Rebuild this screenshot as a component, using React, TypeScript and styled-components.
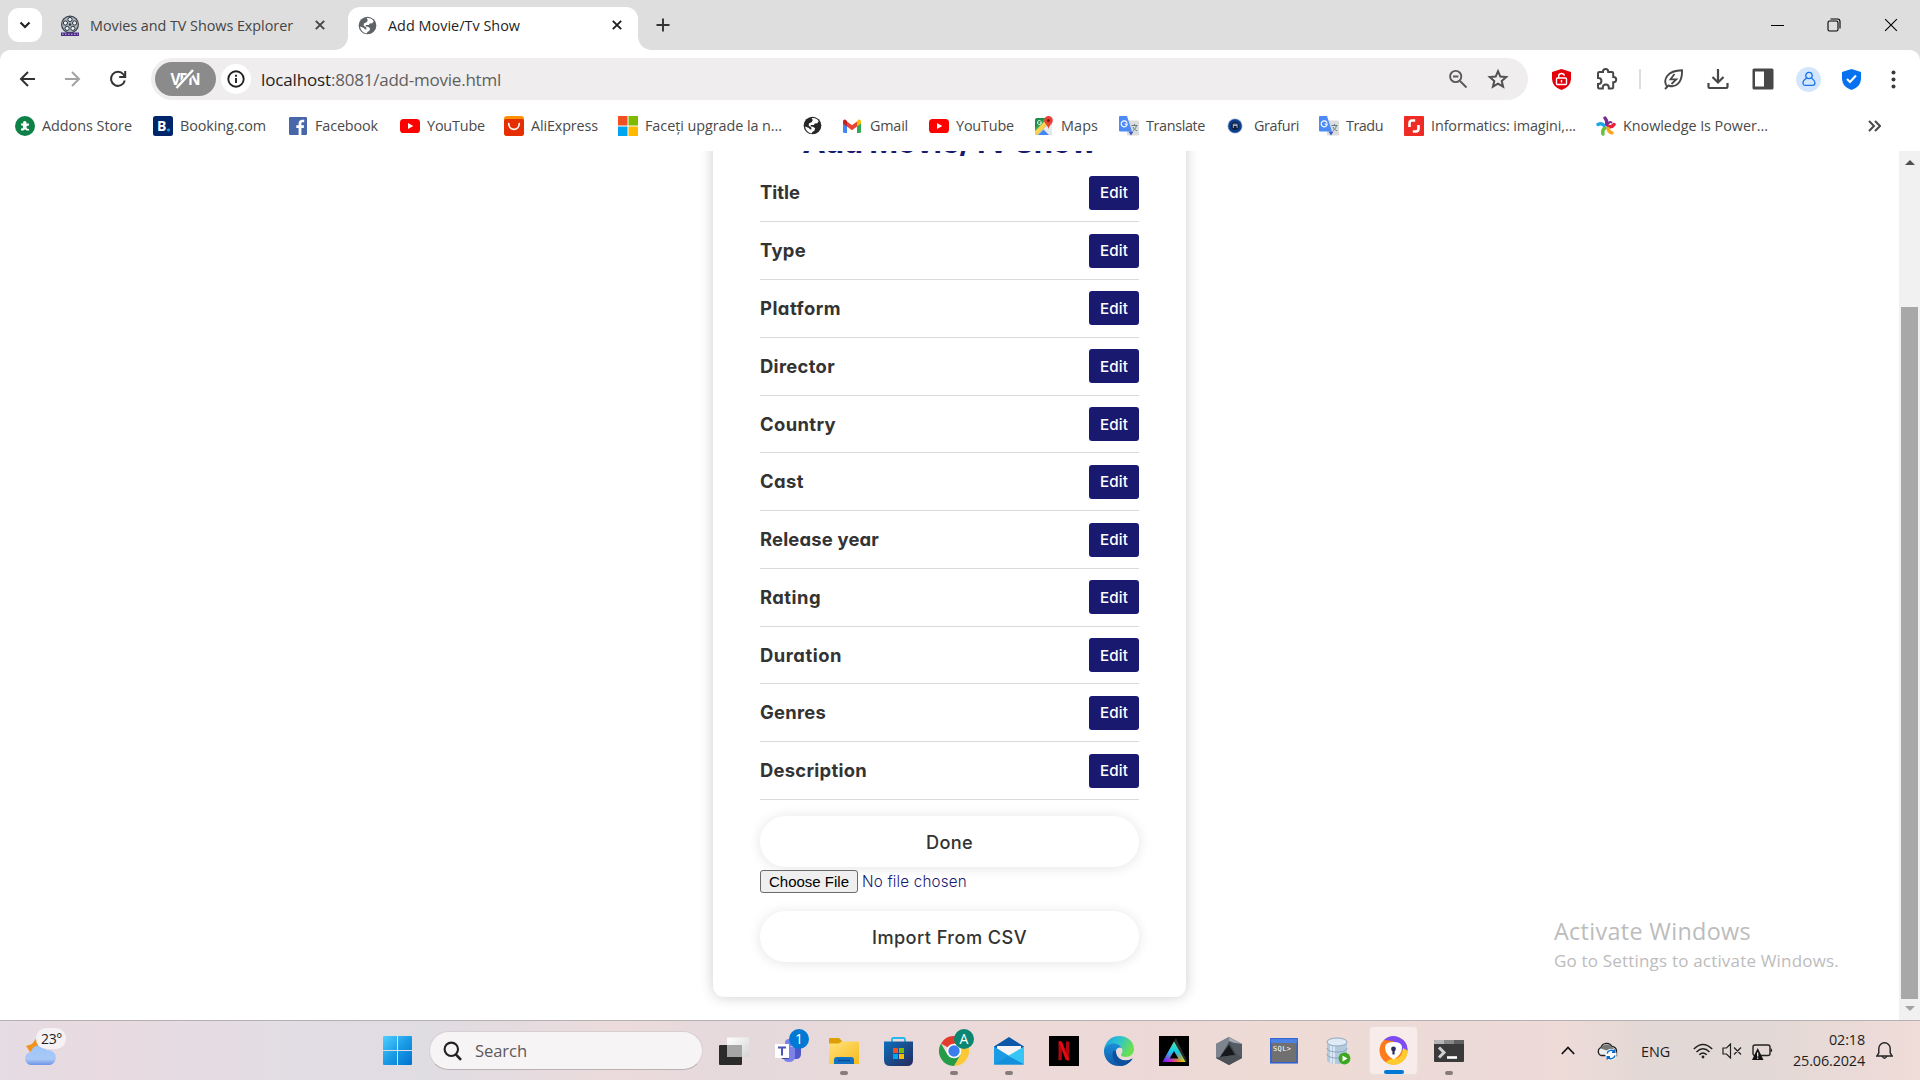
import React, { useLayoutEffect, useRef, useState } from "react";
import styled, { createGlobalStyle, css } from "styled-components";

const ui = `"Open Sans", "Noto Sans", sans-serif`;
const geo = `Inter, "Open Sans", sans-serif`;
const navy = "#191970";

const Global = createGlobalStyle`
  *, *::before, *::after { box-sizing: border-box; }
  html, body { margin: 0; padding: 0; background: #fff; overflow: hidden; }
  svg { display: block; flex: none; }
`;

const Window = styled.div`
  width: 1920px;
  height: 1080px;
  display: flex;
  flex-direction: column;
  overflow: hidden;
  font-family: ${ui};
  color: #1f1f1f;
`;

/* ---------- text that is tracked to fill a given width ---------- */

const Span = styled.span<{ $size: number; $weight?: number; $color?: string; $geo?: boolean }>`
  display: inline-block;
  white-space: pre;
  font-family: ${(p) => (p.$geo ? geo : ui)};
  font-size: ${(p) => p.$size}px;
  font-weight: ${(p) => p.$weight ?? 400};
  color: ${(p) => p.$color ?? "inherit"};
  ${(p) => p.$geo && css`font-feature-settings: "cv11";`}
`;

const LabelBox = styled.span<{ $w: number }>`
  width: ${(p) => p.$w}px;
  flex: none;
  display: block;
  white-space: nowrap;
`;

type LabelProps = {
  w: number;
  size: number;
  weight?: number;
  color?: string;
  geometric?: boolean;
  children: React.ReactNode;
};

function Label({ w, size, weight, color, geometric, children }: LabelProps) {
  const ref = useRef<HTMLSpanElement>(null);
  const [track, setTrack] = useState(0);
  useLayoutEffect(() => {
    const fit = () => {
      const el = ref.current;
      if (!el) return;
      const prev = el.style.letterSpacing;
      el.style.letterSpacing = "0px";
      const natural = el.getBoundingClientRect().width;
      el.style.letterSpacing = prev;
      setTrack((w - natural) / (el.textContent || " ").length);
    };
    fit();
    document.fonts.ready.then(fit);
  }, [w]);
  return (
    <LabelBox $w={w}>
      <Span ref={ref} $size={size} $weight={weight} $color={color} $geo={geometric} style={{ letterSpacing: track }}>
        {children}
      </Span>
    </LabelBox>
  );
}

/* ---------- tab strip ---------- */

const TabStrip = styled.div`
  height: 50px;
  flex: none;
  background: #dedede;
  display: flex;
  align-items: center;
`;

const TabSearch = styled.div`
  width: 34px;
  height: 34px;
  margin: 0 18px 0 8px;
  border-radius: 11px;
  background: #fff;
  display: flex;
  align-items: center;
  justify-content: center;
`;

const Tab = styled.div<{ $active?: boolean; $w: number }>`
  width: ${(p) => p.$w}px;
  height: 43px;
  align-self: flex-end;
  display: flex;
  align-items: center;
  padding: 0 0 7px;
  position: relative;
  ${(p) =>
    p.$active &&
    css`
      background: #fff;
      border-radius: 12px 12px 0 0;
      &::before,
      &::after {
        content: "";
        position: absolute;
        bottom: 0;
        width: 13px;
        height: 13px;
      }
      &::before {
        left: -13px;
        background: radial-gradient(circle at 0 0, transparent 12.5px, #fff 13px);
      }
      &::after {
        right: -13px;
        background: radial-gradient(circle at 100% 0, transparent 12.5px, #fff 13px);
      }
    `}
`;

const Item = styled.div<{ $ml?: number; $w?: number }>`
  margin-left: ${(p) => p.$ml ?? 0}px;
  width: ${(p) => (p.$w ? p.$w + "px" : "auto")};
  flex: none;
  display: flex;
  align-items: center;
  justify-content: center;
`;

const Spacer = styled.div`
  flex: 1;
`;

/* ---------- toolbar ---------- */

const ToolbarWrap = styled.div`
  background: #dedede;
  flex: none;
`;

const Toolbar = styled.div`
  height: 58px;
  background: #fff;
  border-radius: 10px 10px 0 0;
  display: flex;
  align-items: center;
  padding-left: 19px;
`;

const Omnibox = styled.div`
  width: 1377px;
  height: 42px;
  margin-left: 24px;
  border-radius: 21px;
  background: #efedee;
  display: flex;
  align-items: center;
  padding-left: 4px;
`;

const VpnPill = styled.div`
  width: 61px;
  height: 34px;
  border-radius: 17px;
  background: #8b8b8b;
  display: flex;
  align-items: center;
  justify-content: center;
  color: #fff;
`;

const InfoDot = styled.div`
  width: 30px;
  height: 30px;
  margin: 0 10px 0 5px;
  border-radius: 50%;
  background: #fff;
  display: flex;
  align-items: center;
  justify-content: center;
`;

const Url = styled.div`
  display: flex;
  line-height: 24px;
  padding-top: 1px;
`;

const Divider = styled.div`
  width: 2px;
  height: 20px;
  margin-left: 21px;
  background: #dedede;
`;

const Avatar = styled.div`
  width: 25px;
  height: 25px;
  border-radius: 50%;
  background: #d3e6fd;
  margin-left: 22px;
  display: flex;
  align-items: center;
  justify-content: center;
`;

/* ---------- bookmarks ---------- */

const Bookmarks = styled.div`
  height: 43px;
  flex: none;
  background: #fff;
  display: flex;
  align-items: center;
  padding: 0 39px 7px 15px;
  color: #4a4a4a;
`;

const Bookmark = styled.div<{ $w: number }>`
  width: ${(p) => p.$w}px;
  flex: none;
  display: flex;
  align-items: center;
`;

const BookmarkIcon = styled.div`
  width: 20px;
  height: 20px;
  margin-right: 7px;
  flex: none;
`;

const BookmarkText = styled.div`
  padding-bottom: 2px;
`;

/* ---------- page ---------- */

const Viewport = styled.div`
  height: 869px;
  flex: none;
  display: flex;
  background: #fff;
`;

const Page = styled.main`
  flex: 1;
  height: 869px;
  overflow: hidden;
  display: flex;
  justify-content: center;
  align-items: flex-end;
  padding-bottom: 23px;
  position: relative;
`;

const Card = styled.section`
  width: 473px;
  height: 1000px;
  flex: none;
  display: flex;
  flex-direction: column;
  justify-content: flex-end;
  padding: 0 47px 35px;
  border-radius: 11px;
  background: #fff;
  box-shadow: 0 0 14px rgba(0, 0, 0, 0.2);
`;

const Heading = styled.h1`
  margin: 0 0 1px;
  height: 46px;
  line-height: 46px;
  display: flex;
  justify-content: center;
`;

const Row = styled.div`
  height: 57.77px;
  flex: none;
  display: flex;
  justify-content: space-between;
  align-items: center;
  border-bottom: 1px solid #dadada;
`;

const EditButton = styled.button`
  width: 50px;
  height: 34px;
  padding: 0 0 0 11px;
  border: 0;
  border-radius: 3px;
  background: ${navy};
  text-align: left;
`;

const PillButton = styled.button<{ $mt: number }>`
  width: 100%;
  height: 51px;
  flex: none;
  margin: ${(p) => p.$mt}px 0 0;
  padding: 0;
  border: 0;
  border-radius: 26px;
  background: #fff;
  display: flex;
  align-items: center;
  justify-content: center;
  box-shadow: 0 1px 13px rgba(0, 0, 0, 0.11);
`;

const FileRow = styled.div`
  height: 23px;
  margin-top: 3px;
  flex: none;
  display: flex;
  align-items: center;
`;

const FileButton = styled.button`
  width: 98px;
  height: 23px;
  margin-right: 4px;
  padding: 0;
  border: 1px solid #6b6b6b;
  border-radius: 3px;
  background: #efefef;
  color: #000;
  font: 15px/20px "Liberation Sans", Arial, sans-serif;
`;

const FileName = styled.div`
  padding-bottom: 2px;
`;

const Watermark = styled.div`
  position: absolute;
  left: 1554px;
  top: 765px;
  color: #bcbcbc;
  line-height: 30px;
  display: flex;
  flex-direction: column;
`;

const WatermarkNote = styled.div`
  line-height: 24px;
`;

const Scrollbar = styled.div`
  width: 21px;
  background: #f1f1f1;
  display: flex;
  flex-direction: column;
  align-items: center;
  padding: 9px 0 9px;
`;

const Thumb = styled.div`
  width: 17px;
  height: 692px;
  margin-top: 141px;
  background: #a8a8a8;
`;

const Arrow = styled.div<{ $down?: boolean }>`
  width: 0;
  height: 0;
  border: 5px solid transparent;
  ${(p) =>
    p.$down
      ? css`border-top: 5px solid #a3a3a3; border-bottom: 0; margin-top: 7px;`
      : css`border-bottom: 5px solid #505050; border-top: 0; margin-bottom: 1px;`}
`;

/* ---------- taskbar ---------- */

const Taskbar = styled.footer`
  height: 60px;
  flex: none;
  border-top: 1px solid #b8b1b3;
  display: flex;
  align-items: center;
  position: relative;
  background: linear-gradient(
    90deg,
    #e6dce3 0, #e8dae0 110px, #e3dde4 270px, #dfdce2 430px, #ecdbdc 620px, #e5d9dc 730px,
    #ecdad9 1000px, #ecd9d7 1150px, #eedbd5 1290px, #ecdad8 1470px, #eedbd8 1560px,
    #e2d8d5 1650px, #e2d8d5 1760px, #f0dcd9 1920px
  );
`;

const Weather = styled.div`
  width: 60px;
  height: 46px;
  margin-left: 22px;
  position: relative;
  flex: none;
`;

const TempBadge = styled.div`
  position: absolute;
  left: 14px;
  top: 0;
  width: 30px;
  height: 21px;
  border-radius: 10px;
  background: #f6f1f3;
  padding-left: 5px;
  line-height: 20px;
`;

const SearchBox = styled.div`
  width: 274px;
  height: 39px;
  margin: 0 3px 0 17px;
  border-radius: 20px;
  background: #f7f4f6;
  border: 1px solid #d8cfd3;
  border-bottom-color: #b9b1b4;
  display: flex;
  align-items: center;
  padding-left: 13px;
  gap: 13px;
  flex: none;
`;

const AppSlot = styled.div<{ $active?: boolean; $mark?: "dot" | "bar" }>`
  width: 49px;
  height: 49px;
  margin: 0 3px;
  flex: none;
  border-radius: 5px;
  position: relative;
  display: flex;
  align-items: center;
  justify-content: center;
  ${(p) => p.$active && css`background: #f7ecea; box-shadow: 0 0 0 1px #eadfdc inset;`}
  ${(p) =>
    p.$mark &&
    css`
      &::after {
        content: "";
        position: absolute;
        bottom: ${p.$mark === "bar" ? 1 : 0}px;
        left: 50%;
        width: ${p.$mark === "bar" ? 20 : 8}px;
        height: 4px;
        border-radius: 2px;
        transform: translateX(-50%);
        background: ${p.$mark === "bar" ? "#0078d4" : "#857c7b"};
      }
    `}
`;

const CountBadge = styled.div<{ $bg: string; $x: number; $y: number }>`
  position: absolute;
  left: ${(p) => p.$x}px;
  top: ${(p) => p.$y}px;
  width: 20px;
  height: 20px;
  border-radius: 50%;
  background: ${(p) => p.$bg};
  color: #fff;
  font-size: 14px;
  line-height: 19px;
  text-align: center;
`;

const Clock = styled.div`
  width: 74px;
  margin-left: 18px;
  margin-bottom: 2px;
  display: flex;
  flex-direction: column;
  align-items: flex-end;
  line-height: 20px;
  flex: none;
`;

/* ---------- drawings ---------- */

const Cross = ({ c = "#303030", s = 10, w = 1.9 }) => (
  <svg width={s} height={s} viewBox="0 0 10 10" stroke={c} strokeWidth={w} fill="none">
    <path d="M.8.8l8.4 8.4M9.2.8L.8 9.2" />
  </svg>
);

const Globe = ({ c }: { c: string }) => (
  <svg width="19" height="19" viewBox="0 0 20 20">
    <circle cx="10" cy="10" r="9.3" fill={c} />
    <path d="M9 2.2c3.2-.5 6 .8 7.5 3.3l-1.5 2.1-2.6.2-1 1.6-3 .1-.6 1.2 3.2.8 1.8 1.6-.8 2.3-2.2 1.4-.4 1.4C5.600 18.100 2.600 14.600 2.200 11l4.100 1.500.9 1.500 1.800.2-.3-2.100-2.700-1.900.2-2.300 3.100-1.500 1-2.300z" fill="#fff" />
  </svg>
);

const FilmReel = () => (
  <svg width="20" height="21" viewBox="0 0 20 21">
    <circle cx="10" cy="9.500" r="9" fill="#38404a" />
    <circle cx="10" cy="9.500" r="7.800" fill="#a9b4bd" />
    {[[10, 4.5], [14.6, 8], [12.900, 13.400], [7.100, 13.400], [5.400, 8]].map(([x, y]) => (
      <circle key={x} cx={x} cy={y} r="2.100" fill="#e8eef1" stroke="#30363d" strokeWidth="1" />
    ))}
    <circle cx="10" cy="9.500" r="1.300" fill="#30363d" />
    <path d="M1 17.500h18V21H1z" fill="#4b2a86" />
    <path d="M2 19.200h16" stroke="#d9c9f0" strokeWidth="1" strokeDasharray="1.500 1.500" />
  </svg>
);

const YouTube = () => (
  <svg width="20" height="20" viewBox="0 0 20 20">
    <rect x="0" y="3" width="20" height="14" rx="3.600" fill="#f00" />
    <path d="M8 7l5.300 3L8 13z" fill="#fff" />
  </svg>
);

const Translate = () => (
  <svg width="20" height="20" viewBox="0 0 20 20">
    <rect x="8" y="4.500" width="12" height="15" rx="1" fill="#dcdcdc" />
    <path d="M9.500 15.500h5l-2.500 4z" fill="#3757c4" />
    <path d="M1 0h7l5 15.500H1a1 1 0 0 1-1-1V1a1 1 0 0 1 1-1z" fill="#4c8bf5" />
    <path d="M8 6.700A3 3 0 1 0 8.200 8.200H5.800" stroke="#fff" strokeWidth="1.200" fill="none" />
    <path d="M12.500 9.500h6M15.500 8v1.500M17.500 9.500c-.4 2.500-2 4-3.500 5M14 11c.8 1.800 2 3 4 3.800" stroke="#607d8b" strokeWidth="1" fill="none" />
  </svg>
);

const bookmarkIcons: Record<string, React.ReactNode> = {
  addons: (
    <svg width="20" height="20" viewBox="0 0 20 20">
      <circle cx="10" cy="10" r="10" fill="#0d8148" />
      <path d="M6 7.500h2.300a1.700 1.700 0 1 1 3 0H14v2.300a1.700 1.700 0 1 0 0 3V14.500h-2.500a1.600 1.600 0 0 0-3 0H6v-2.200a1.500 1.500 0 1 0 0-2.800z" fill="#fff" />
    </svg>
  ),
  booking: (
    <svg width="20" height="20" viewBox="0 0 20 20">
      <rect width="20" height="20" rx="2.500" fill="#00256a" />
      <text x="4" y="15" fontSize="14" fontWeight="700" fill="#fff" fontFamily="Open Sans">B</text>
      <circle cx="15.500" cy="14" r="1.600" fill="#09a3e8" />
    </svg>
  ),
  facebook: (
    <svg width="20" height="20" viewBox="0 0 20 20">
      <rect x="1" y="1" width="18" height="18" rx="1" fill="#4867aa" />
      <path d="M13.400 19v-7h2.300l.4-2.800h-2.700V7.600c0-.9.300-1.400 1.400-1.400h1.400V3.800c-3.500-.5-5.600.6-5.600 3.500v1.900H8.300V12h2.300v7z" fill="#fff" />
    </svg>
  ),
  youtube: <YouTube />,
  ali: (
    <svg width="20" height="20" viewBox="0 0 20 20">
      <rect width="20" height="20" rx="3" fill="#ff9000" />
      <path d="M0 5q0-2 2-2h16q2 0 2 2v12a3 3 0 0 1-3 3H3a3 3 0 0 1-3-3z" fill="#e62e04" />
      <path d="M4.700 7.500c.4 7.800 10.200 7.800 10.600 0" stroke="#fff" strokeWidth="1.700" fill="none" strokeLinecap="round" />
    </svg>
  ),
  ms: (
    <svg width="20" height="20" viewBox="0 0 20 20">
      <path d="M0 0h9.500v9.500H0z" fill="#f25022" />
      <path d="M10.500 0H20v9.500h-9.500z" fill="#7fba00" />
      <path d="M0 10.500h9.500V20H0z" fill="#00a4ef" />
      <path d="M10.500 10.500H20V20h-9.500z" fill="#ffb900" />
    </svg>
  ),
  globe: <Globe c="#262626" />,
  gmail: (
    <svg width="20" height="20" viewBox="0 0 20 20">
      <path d="M0 5.500v10.300c0 .7.500 1.200 1.200 1.200H4V9z" fill="#4285f4" />
      <path d="M14 9v8h2.800c.7 0 1.200-.5 1.200-1.200V5.500z" fill="#34a853" />
      <path d="M4 5.500v5l5 3.700 5-3.700v-5L9 9.200z" fill="#ea4335" />
      <path d="M0 5.500v2L4 10.500V5L2.800 4C1.500 3 0 4 0 5.500z" fill="#c5221f" />
      <path d="M18 5.500v2l-4 3V5l1.200-1C16.500 3 18 4 18 5.500z" fill="#fbbc04" />
    </svg>
  ),
  maps: (
    <svg width="20" height="20" viewBox="0 0 20 20">
      <rect x="1" y="2" width="17" height="17" rx="2.500" fill="#34a853" />
      <path d="M3 19L16 6l2 2v9a2 2 0 0 1-2 2z" fill="#e8eaed" />
      <path d="M4 19l5.500-5.500L15 19z" fill="#4285f4" />
      <path d="M1 15L14 2l3 3L3 19q-2-.500-2-2z" fill="#ffd04b" />
      <path d="M1 12L11 2H3.500Q1 2 1 4.500z" fill="#1e8e4a" />
      <path d="M14.500 0a4.300 4.300 0 0 0-4.300 4.400c0 3 3.300 4.200 4.300 8.600 1-4.400 4.300-5.600 4.300-8.600A4.300 4.300 0 0 0 14.500 0z" fill="#ea4335" />
      <circle cx="14.500" cy="4.400" r="1.500" fill="#811411" />
      <path d="M7.200 5.500a2 2 0 1 0 .3 1.300H5.800" stroke="#fff" strokeWidth="1" fill="none" />
    </svg>
  ),
  translate: <Translate />,
  grafuri: (
    <svg width="16" height="20" viewBox="0 0 16 20">
      <circle cx="8" cy="10" r="7.500" fill="#8ea9cf" />
      <circle cx="8" cy="10" r="6.700" fill="#0c3d8c" />
      <circle cx="8" cy="10" r="4" fill="#111f3c" />
      <path d="M6.300 12V8.200h3.800V12M6.300 9.500h3.800" stroke="#a9c2e6" strokeWidth=".9" fill="none" />
    </svg>
  ),
  informatics: (
    <svg width="20" height="20" viewBox="0 0 20 20">
      <rect width="20" height="20" rx="1" fill="#ee2b24" />
      <path d="M5.500 11V7.200q0-2.700 2.700-2.700h3M14.500 9v3.800q0 2.700-2.700 2.700h-3" stroke="#fff" strokeWidth="2.600" fill="none" />
    </svg>
  ),
  knowledge: (
    <svg width="20" height="20" viewBox="0 0 20 20" fill="none" strokeWidth="3.400" strokeLinecap="round">
      <path d="M10.500 8.500Q11.500 5 9 2" stroke="#7b2a90" />
      <path d="M11.500 8.500Q13.500 5 15.500 6.500" stroke="#7b2a90" strokeWidth="2" />
      <path d="M12.500 10.500q3.500 1 5.500-2" stroke="#e8203a" />
      <path d="M12 12.500q.5 3.500 4 4.300" stroke="#f9a51a" />
      <path d="M9 12q-3 2-2 6" stroke="#6cbf3a" />
      <path d="M8 9.500Q5.500 6.500 2 8.500" stroke="#1da7e0" />
    </svg>
  ),
};

type BM = { icon: string; label: string; w: number; total: number };
const bookmarks: BM[] = [
  { icon: "addons", label: "Addons Store", w: 90, total: 138 },
  { icon: "booking", label: "Booking.com", w: 86, total: 135 },
  { icon: "facebook", label: "Facebook", w: 63, total: 112 },
  { icon: "youtube", label: "YouTube", w: 58, total: 104 },
  { icon: "ali", label: "AliExpress", w: 67, total: 114 },
  { icon: "ms", label: "Faceți upgrade la n...", w: 137, total: 185 },
  { icon: "globe", label: "", w: 0, total: 40 },
  { icon: "gmail", label: "Gmail", w: 38, total: 86 },
  { icon: "youtube", label: "YouTube", w: 58, total: 105 },
  { icon: "maps", label: "Maps", w: 37, total: 85 },
  { icon: "translate", label: "Translate", w: 59, total: 108 },
  { icon: "grafuri", label: "Grafuri", w: 45, total: 92 },
  { icon: "translate", label: "Tradu", w: 37, total: 85 },
  { icon: "informatics", label: "Informatics: imagini,...", w: 145, total: 192 },
  { icon: "knowledge", label: "Knowledge Is Power...", w: 145, total: 190 },
];

const fields: [string, number][] = [
  ["Title", 40],
  ["Type", 46],
  ["Platform", 81],
  ["Director", 75],
  ["Country", 76],
  ["Cast", 44],
  ["Release year", 119],
  ["Rating", 61],
  ["Duration", 82],
  ["Genres", 66],
  ["Description", 107],
];

const WinLogo = () => (
  <svg width="29" height="29" viewBox="0 0 29 29">
    <defs>
      <linearGradient id="wl" x1="0" y1="0" x2="1" y2="1">
        <stop offset="0" stopColor="#4fd0ff" />
        <stop offset=".5" stopColor="#1a9be6" />
        <stop offset="1" stopColor="#0072cf" />
      </linearGradient>
    </defs>
    <path d="M1 0h13v14H0V1q0-1 1-1zM15 0h13q1 0 1 1v13H15zM0 15h14v14H1q-1 0-1-1zM15 15h14v13q0 1-1 1H15z" fill="url(#wl)" />
  </svg>
);

const TaskView = () => (
  <svg width="30" height="30" viewBox="0 0 30 30">
    <defs>
      <linearGradient id="tv" x1="0" y1="0" x2="1" y2="1">
        <stop offset="0" stopColor="#fff" />
        <stop offset="1" stopColor="#d5d5d5" />
      </linearGradient>
    </defs>
    <rect x="0" y="9" width="23" height="20" rx="1" fill="#2b2b2b" />
    <rect x="8" y="1.500" width="22" height="19.500" rx="1" fill="url(#tv)" />
    <path d="M8 9h15v12H9q-1 0-1-1z" fill="#a6a6a6" />
  </svg>
);

const Teams = () => (
  <svg width="30" height="30" viewBox="0 0 30 30">
    <circle cx="15" cy="7" r="4" fill="#7b83eb" />
    <path d="M18 11h9v7q0 5-5 5h-4z" fill="#5059c9" />
    <path d="M9 11h12v9q0 6-6 6t-6-6z" fill="#7b83eb" />
    <path d="M4 11h11v12H8z" fill="#3e4498" />
    <rect x="1" y="8" width="14" height="14" fill="#fff" />
    <path d="M4 11.500h8M8 11.500v8" stroke="#4b53bc" strokeWidth="2" />
  </svg>
);

const Folder = () => (
  <svg width="30" height="30" viewBox="0 0 30 30">
    <defs>
      <linearGradient id="fo" x1="0" y1="0" x2="1" y2="1">
        <stop offset="0" stopColor="#ffe27a" />
        <stop offset="1" stopColor="#f7bb1d" />
      </linearGradient>
    </defs>
    <path d="M0 3q0-1 1-1h9l3 3v6H0z" fill="#dd9f05" />
    <path d="M0 7.500h9.500L13 5.500h16q1 0 1 1V28H0z" fill="url(#fo)" />
    <path d="M5 28v-4q0-3 3-3h14q3 0 3 3v4z" fill="#1172c4" />
    <path d="M9 24.500h12" stroke="#0a4f94" strokeWidth="1.500" />
  </svg>
);

const Store = () => (
  <svg width="29" height="30" viewBox="0 0 29 30">
    <defs>
      <linearGradient id="st" x1="0" y1="0" x2="1" y2="1">
        <stop offset="0" stopColor="#0b6fbd" />
        <stop offset="1" stopColor="#28295a" />
      </linearGradient>
    </defs>
    <path d="M8 8V3.500Q8 2 9.500 2h10Q21 2 21 3.500V8" stroke="#24b7f0" strokeWidth="1.900" fill="none" />
    <path d="M0 5.500h29V24q0 6-6 6H6q-6 0-6-6z" fill="url(#st)" />
    <path d="M9 12h5v5H9z" fill="#f25022" />
    <path d="M15 12h5v5h-5z" fill="#7fba00" />
    <path d="M9 18h5v5H9z" fill="#00a4ef" />
    <path d="M15 18h5v5h-5z" fill="#ffb900" />
  </svg>
);

const Chrome = () => (
  <svg width="30" height="30" viewBox="0 0 30 30">
    <path d="M15 15L2 7.500A15 15 0 0 1 28 7.500z" fill="#e33b2e" />
    <path d="M15 7.500h13A15 15 0 0 1 15 30l6.500-11.300z" fill="#fcc934" />
    <path d="M8.500 18.700L2 7.500A15 15 0 0 0 15 30l6.500-11.300z" fill="#259b48" />
    <circle cx="15" cy="15" r="7.300" fill="#fff" />
    <circle cx="15" cy="15" r="5.700" fill="#3b7ded" />
  </svg>
);

const Mail = () => (
  <svg width="30" height="30" viewBox="0 0 30 30">
    <path d="M0 10.500L15 1l15 9.500V28H0z" fill="#0a5aa9" />
    <path d="M3 10h24v10H3z" fill="#f4f4f4" />
    <path d="M0 10.500L17 21 30 28.500H0z" fill="#1a9be3" />
    <path d="M30 10.500L14 20l16 8.500z" fill="#36c5f7" />
    <path d="M0 28.500L14 20l3 1.500 13 7z" fill="#148fdb" />
  </svg>
);

const Netflix = () => (
  <svg width="30" height="30" viewBox="0 0 30 30">
    <path d="M0 0h30v30H0z" fill="#000" />
    <path d="M9.500 5.500h3.300V24l-3.300.6zM17 5.500h3.300v19.100L17 24z" fill="#b0060f" />
    <path d="M9.500 5.500h3.400l7.400 19.100-3.500-.6z" fill="#e50914" />
  </svg>
);

const Edge = () => (
  <svg width="30" height="30" viewBox="0 0 30 30">
    <defs>
      <linearGradient id="e1" x1="0" y1="0" x2="1" y2=".4">
        <stop offset="0" stopColor="#1f9be0" />
        <stop offset=".5" stopColor="#2bc3d2" />
        <stop offset="1" stopColor="#6be04f" />
      </linearGradient>
      <linearGradient id="e2" x1="0" y1="0" x2="0" y2="1">
        <stop offset="0" stopColor="#1b8fd8" />
        <stop offset="1" stopColor="#0e56a8" />
      </linearGradient>
    </defs>
    <path d="M0 14C1 6 7 0 15 0c9 0 15 6 15 13 0 5-4 8-8 8-3 0-5-1-5-2s1.500-1.500 1.500-4c0-4-4-7-8.500-7C5 8 1 11 0 14z" fill="url(#e1)" />
    <path d="M0 14c1-4 5-6.500 9.500-6.500 4 0 7 2 8.300 4.500-1-.7-5.300-1-5.800 3-.5 5 4 10 10 9.500 2.500 0 4.500-1 6.500-2C26 27 21 30 15 30 6 30-.5 23 0 14z" fill="url(#e2)" />
    <path d="M9.500 14.500C7 19 9 27 17 29.900 22 29.500 26.500 26.500 28.600 22.500 20 27 12 23 12 15.500z" fill="#0c4f9e" />
  </svg>
);

const Prism = () => (
  <svg width="30" height="30" viewBox="0 0 30 30">
    <defs>
      <linearGradient id="pr" x1="0" y1="0" x2="1" y2="0">
        <stop offset="0" stopColor="#5b10ff" />
        <stop offset=".35" stopColor="#e010c8" />
        <stop offset=".65" stopColor="#ff6a10" />
        <stop offset="1" stopColor="#d6f010" />
      </linearGradient>
      <linearGradient id="pr2" x1="0" y1="0" x2="0" y2="1">
        <stop offset="0" stopColor="#3df0a0" />
        <stop offset=".5" stopColor="#15c8ee" />
        <stop offset="1" stopColor="#15c8ee" stopOpacity="0" />
      </linearGradient>
    </defs>
    <path d="M0 0h30v30H0z" fill="#000" />
    <path d="M17 2l11 23-2 1L15 5z" fill="#2a2a2a" />
    <path d="M15 5.500L26.500 26H3.500z" fill="url(#pr)" />
    <path d="M15 5.500L26.500 26H3.500z" fill="url(#pr2)" />
    <path d="M15 15l4.300 7.500h-8.600z" fill="#000" />
  </svg>
);

const Hex = () => (
  <svg width="28" height="30" viewBox="0 0 28 30">
    <path d="M14 1l13 7v14l-13 7-13-7V8z" fill="#454b54" />
    <path d="M14 1l13 7v3L14 5 4 14 1 20V8z" fill="#a3a9b1" />
    <path d="M14 1v5L5 21l-4 1V8z" fill="#7d848e" />
    <path d="M14 9l6 10-15 2z" fill="#16181c" />
    <path d="M1 22l4-1 15-2 7 3-13 7z" fill="#4d5259" />
    <path d="M14 6l8 13 5 3V8z" fill="#555c66" />
  </svg>
);

const Sql = () => (
  <svg width="28" height="26" viewBox="0 0 28 26">
    <rect x=".8" y=".8" width="26.400" height="24" fill="#707070" stroke="#2c5fd0" strokeWidth="1.500" />
    <path d="M1 1h26v4H1z" fill="#4b82e4" />
    <text x="3" y="12.500" fontSize="7" fill="#fff" fontFamily="DejaVu Sans Mono" textLength="18">SQL&gt;</text>
  </svg>
);

const Database = () => (
  <svg width="26" height="30" viewBox="0 0 26 30">
    <path d="M1 6v18c0 2.500 4.500 4 10 4s10-1.500 10-4V6z" fill="#b4c9dd" />
    <path d="M5 8v19M8 9v19" stroke="#dbe8f3" strokeWidth="2" />
    <path d="M1 12c0 2.500 4.500 4 10 4s10-1.500 10-4M1 18c0 2.500 4.500 4 10 4s10-1.500 10-4" stroke="#8aa5bf" fill="none" />
    <ellipse cx="11" cy="6" rx="10" ry="4" fill="#dfeaf4" stroke="#8fa9c2" />
    <circle cx="18.500" cy="22.500" r="5.900" fill="#3da71f" />
    <path d="M16.500 19.500l5 3-5 3z" fill="#fff" />
  </svg>
);

const SecureBrowser = () => (
  <svg width="29" height="29" viewBox="0 0 29 29">
    <circle cx="14.500" cy="14.500" r="14" fill="#ff7a1a" />
    <path d="M5 4A14 14 0 0 1 28.500 14.500q-3 3-7-2.500L14 5z" fill="#7b4df2" />
    <path d="M28.500 14.500A14 14 0 0 1 7 26.500q2-4 8-3.500 8 0 9-11z" fill="#ffcb2e" />
    <path d="M14.500 6q8 0 8.500 5 0 8-8.500 12.500Q6 19 6 11q.5-5 8.500-5z" fill="#fff" />
    <circle cx="14.500" cy="13" r="2.400" fill="#2b2f5a" />
    <path d="M13.400 13h2.200v5.500h-2.200z" fill="#2b2f5a" />
  </svg>
);

const Terminal = () => (
  <svg width="30" height="24" viewBox="0 0 30 24">
    <rect y="1" width="30" height="22" rx="1" fill="#3a3a3a" />
    <path d="M0 5V2q0-1 1-1h9v4z" fill="#b5b5b5" />
    <path d="M10 1h10v4H10z" fill="#888" />
    <path d="M20 1h9q1 0 1 1v3H20z" fill="#5f5f5f" />
    <path d="M5 8.500l5 5-5 5" stroke="#d0d0d0" strokeWidth="3" fill="none" />
    <path d="M13 18.500h10" stroke="#fff" strokeWidth="2.600" />
  </svg>
);

type App = { el: React.ReactNode; mark?: "dot" | "bar"; active?: boolean; badge?: [string, string, number, number] };
const apps: App[] = [
  { el: <TaskView /> },
  { el: <Teams />, badge: ["1", "#0078d4", 25, 3] },
  { el: <Folder />, mark: "dot" },
  { el: <Store /> },
  { el: <Chrome />, mark: "dot", badge: ["A", "#0b8673", 25, 3] },
  { el: <Mail />, mark: "dot" },
  { el: <Netflix /> },
  { el: <Edge /> },
  { el: <Prism /> },
  { el: <Hex /> },
  { el: <Sql /> },
  { el: <Database /> },
  { el: <SecureBrowser />, mark: "bar", active: true },
  { el: <Terminal />, mark: "dot" },
];

const ink = "#474747";

export default function App() {
  return (
    <Window>
      <Global />
      <TabStrip>
        <TabSearch>
          <svg width="12" height="8" viewBox="0 0 12 8" fill="none" stroke="#222" strokeWidth="2.200">
            <path d="M1.500 1.500L6 6l4.500-4.500" />
          </svg>
        </TabSearch>
        <Tab $w={288}>
          <FilmReel />
          <Item $ml={10}>
            <Label w={203} size={14.4} color="#454545">Movies and TV Shows Explorer</Label>
          </Item>
          <Item $ml={22}><Cross c="#454545" /></Item>
        </Tab>
        <Tab $w={290} $active>
          <Item $ml={10}><Globe c="#5f6368" /></Item>
          <Item $ml={11}>
            <Label w={132} size={14.4}>Add Movie/Tv Show</Label>
          </Item>
          <Item $ml={92}><Cross c="#1f1f1f" /></Item>
        </Tab>
        <Item $ml={18}>
          <svg width="14" height="14" viewBox="0 0 14 14" stroke="#333" strokeWidth="1.900"><path d="M7 .5v13M.5 7h13" /></svg>
        </Item>
        <Spacer />
        <svg width="13" height="13" viewBox="0 0 13 13" stroke="#000"><path d="M0 6.500h13" /></svg>
        <Item $ml={43}>
          <svg width="14" height="14" viewBox="0 0 14 14" stroke="#000" fill="none" strokeWidth="1.100">
            <rect x="1" y="3" width="10" height="10" rx="1.500" />
            <path d="M3.500 1h7q2.500 0 2.500 2.500v7" />
          </svg>
        </Item>
        <Item $ml={43}><Cross c="#000" s={14} w={0.8} /></Item>
        <Item $w={22} />
      </TabStrip>

      <ToolbarWrap>
        <Toolbar>
          <svg width="18" height="18" viewBox="0 0 18 18" stroke="#333" fill="none" strokeWidth="2"><path d="M16 9H2.500M9 2L2 9l7 7" /></svg>
          <Item $ml={26}>
            <svg width="18" height="18" viewBox="0 0 18 18" stroke="#a3a3a3" fill="none" strokeWidth="2"><path d="M2 9h13.500M9 2l7 7-7 7" /></svg>
          </Item>
          <Item $ml={28}>
            <svg width="18" height="18" viewBox="0 0 18 18" stroke="#333" fill="none" strokeWidth="2">
              <path d="M15.800 10.500A7 7 0 1 1 14.500 4.500L16 6.500" /><path d="M16.200 1v6h-6" />
            </svg>
          </Item>
          <Omnibox>
            <VpnPill>
              <svg width="32" height="22" viewBox="0 0 32 22">
                <text x="0.500" y="17" fontSize="15.500" fontWeight="700" fill="#fff" fontFamily="Open Sans" textLength="30">VPN</text>
                <path d="M7 21L24 2" stroke="#8b8b8b" strokeWidth="5" />
                <path d="M6.500 20L23 2" stroke="#fff" strokeWidth="2.500" />
              </svg>
            </VpnPill>
            <InfoDot>
              <svg width="18" height="18" viewBox="0 0 18 18">
                <circle cx="9" cy="9" r="7.700" stroke="#222" strokeWidth="1.900" fill="none" />
                <path d="M9 8v5M9 4.700v2" stroke="#222" strokeWidth="1.900" />
              </svg>
            </InfoDot>
            <Url>
              <Label w={70} size={17} color="#1f1f1f">localhost</Label>
              <Label w={170} size={17} color="#5f5f5f">:8081/add-movie.html</Label>
            </Url>
            <Item $ml={947}>
              <svg width="20" height="20" viewBox="0 0 20 20" stroke="#5a5a5a" fill="none" strokeWidth="1.900">
                <circle cx="7.700" cy="7.500" r="5.600" /><path d="M12 12l6.500 6.500M5 7.500h5.400" />
              </svg>
            </Item>
            <Item $ml={19}>
              <svg width="22" height="22" viewBox="0 0 22 22" stroke="#505050" fill="none" strokeWidth="2" strokeLinejoin="miter">
                <path d="M11 3.200l2.300 5.400 5.900.5-4.500 3.900 1.400 5.700L11 15.600l-5.100 3.100L7.300 13 2.800 9.100l5.900-.5z" />
              </svg>
            </Item>
          </Omnibox>
          <Item $ml={24}>
            <svg width="19" height="21" viewBox="0 0 19 21">
              <path d="M9.500 0L19 3v7q-.5 8-9.500 11Q.5 18 0 10V3z" fill="#e3000b" />
              <rect x="4.500" y="9" width="10" height="6.500" rx="1" fill="none" stroke="#fff" strokeWidth="1.400" />
              <path d="M6.700 9V6.700q.2-2.200 2.800-2.200t2.800 2.200M9.500 11v2.500" stroke="#fff" strokeWidth="1.400" fill="none" />
            </svg>
          </Item>
          <Item $ml={23}>
            <svg width="24" height="24" viewBox="0 0 24 24" fill="none" stroke={ink} strokeWidth="2">
              <path d="M4 6.300Q4 5 5.300 5H9V4.600a2.600 2.600 0 0 1 5.200 0V5h3.700q1.300 0 1.300 1.300V10h.4a2.600 2.600 0 0 1 0 5.200h-.4v5q0 1.300-1.300 1.300H14.800v-.9a3 3 0 0 0-6 0v.9H5.300Q4 21.500 4 20.200V17h.4a3 3 0 0 0 0-6H4z" />
            </svg>
          </Item>
          <Divider />
          <Item $ml={22}>
            <svg width="21" height="22" viewBox="0 0 21 22" fill="none" stroke={ink} strokeWidth="1.900">
              <path d="M4 18.500C-.5 12 4 2.500 19 2.300 19.500 14 13 20.500 5.500 17.500L2 21" />
              <path d="M11.500 6L7.500 11.300h5.800L8.500 16" strokeWidth="1.800" />
            </svg>
          </Item>
          <Item $ml={23}>
            <svg width="22" height="22" viewBox="0 0 22 22" fill="none" stroke={ink} strokeWidth="2.200">
              <path d="M11 1v13M5.500 9l5.500 5.500L16.500 9M1.500 15v3.800q0 1.200 1.200 1.200h16.600q1.200 0 1.200-1.200V15" />
            </svg>
          </Item>
          <Item $ml={23}>
            <svg width="22" height="22" viewBox="0 0 22 22">
              <rect width="21" height="21" x=".5" y=".5" rx="1.500" fill={ink} />
              <rect x="3" y="3.500" width="9" height="15" fill="#fff" />
            </svg>
          </Item>
          <Avatar>
            <svg width="14" height="16" viewBox="0 0 14 16" fill="none" stroke="#1673ee" strokeWidth="1.300">
              <circle cx="7" cy="4.500" r="3.200" />
              <path d="M4.300 7.300Q1 9.500 1 12t2.500 2.400h7Q13 14.400 13 12T9.700 7.300" />
            </svg>
          </Avatar>
          <Item $ml={21}>
            <svg width="19" height="21" viewBox="0 0 19 21">
              <path d="M9.500 0L19 3v7q-.5 8-9.500 11Q.5 18 0 10V3z" fill="#0672ef" />
              <path d="M5 10l3 3 6-6.500" stroke="#fff" strokeWidth="2" fill="none" />
            </svg>
          </Item>
          <Item $ml={30}>
            <svg width="5" height="19" viewBox="0 0 5 19" fill="#3a3a3a"><circle cx="2.500" cy="2.500" r="2" /><circle cx="2.500" cy="9.500" r="2" /><circle cx="2.500" cy="16.500" r="2" /></svg>
          </Item>
        </Toolbar>
      </ToolbarWrap>

      <Bookmarks>
        {bookmarks.map((b, i) => (
          <Bookmark key={i} $w={b.total}>
            <BookmarkIcon>{bookmarkIcons[b.icon]}</BookmarkIcon>
            {b.label && (
              <BookmarkText>
                <Label w={b.w} size={14.4}>{b.label}</Label>
              </BookmarkText>
            )}
          </Bookmark>
        ))}
        <Spacer />
        <svg width="13" height="12" viewBox="0 0 13 12" stroke="#4a4a4a" strokeWidth="2" fill="none"><path d="M1 1l5 5-5 5M7 1l5 5-5 5" /></svg>
      </Bookmarks>

      <Viewport>
        <Page>
          <Card>
            <Heading>
              <Label w={294} size={31} weight={700} color={navy} geometric>Add Movie/Tv Show</Label>
            </Heading>
            {fields.map(([name, w]) => (
              <Row key={name}>
                <Label w={w} size={18.4} weight={650} color="#333" geometric>{name}</Label>
                <EditButton>
                  <Label w={28} size={15.2} weight={500} color="#fff" geometric>Edit</Label>
                </EditButton>
              </Row>
            ))}
            <PillButton $mt={16}>
              <Label w={47} size={18.2} weight={550} color="#333" geometric>Done</Label>
            </PillButton>
            <FileRow>
              <FileButton>Choose File</FileButton>
              <FileName>
                <Label w={105} size={15.2} weight={300} color={navy} geometric>No file chosen</Label>
              </FileName>
            </FileRow>
            <PillButton $mt={18}>
              <Label w={155} size={18.2} weight={550} color="#333" geometric>Import From CSV</Label>
            </PillButton>
          </Card>
          <Watermark>
            <Label w={197} size={23.4}>Activate Windows</Label>
            <WatermarkNote>
              <Label w={285} size={17}>Go to Settings to activate Windows.</Label>
            </WatermarkNote>
          </Watermark>
        </Page>
        <Scrollbar>
          <Arrow />
          <Thumb />
          <Arrow $down />
        </Scrollbar>
      </Viewport>

      <Taskbar>
        <Weather>
          <svg width="36" height="40" viewBox="0 0 36 40">
            <defs>
              <linearGradient id="cl" x1="0" y1="0" x2="0" y2="1">
                <stop offset="0" stopColor="#9cc3f7" />
                <stop offset=".7" stopColor="#a9c9f7" />
                <stop offset="1" stopColor="#6c93e6" />
              </linearGradient>
            </defs>
            <path d="M4 18l6-2 6-8v12l-8 4z" fill="#f0941f" />
            <path d="M10 37a6.500 6.500 0 0 1-1-13 8.500 8.500 0 0 1 16-1.500A7.300 7.300 0 0 1 28 37z" fill="url(#cl)" />
          </svg>
          <TempBadge><Label w={21} size={14}>23°</Label></TempBadge>
        </Weather>
        <Item $ml={301}><WinLogo /></Item>
        <SearchBox>
          <svg width="19" height="20" viewBox="0 0 19 20" fill="none" stroke="#222" strokeWidth="2.100"><circle cx="8.300" cy="8.300" r="6.700" /><path d="M12.800 13.300l5.200 5.500" strokeWidth="2.600" /></svg>
          <Label w={52} size={16.6} color="#5c5a5b">Search</Label>
        </SearchBox>
        {apps.map((a, i) => (
          <AppSlot key={i} $active={a.active} $mark={a.mark}>
            {a.el}
            {a.badge && <CountBadge $bg={a.badge[1]} $x={a.badge[2]} $y={a.badge[3]}>{a.badge[0]}</CountBadge>}
          </AppSlot>
        ))}
        <Item $ml={85}>
          <svg width="14" height="9" viewBox="0 0 14 9" stroke="#111" strokeWidth="1.700" fill="none"><path d="M.8 8L7 1.500 13.200 8" /></svg>
        </Item>
        <Item $ml={21}>
          <svg width="22" height="20" viewBox="0 0 22 20">
            <path d="M5 14.500A4.300 4.300 0 0 1 5 6.500 6 6 0 0 1 16 5.500a4.500 4.500 0 0 1 4.500 5v4z" fill="#eee" stroke="#222" strokeWidth="1.300" />
            <path d="M5 7.500A6 6 0 0 1 15.500 6L19 8.500 12 10z" fill="#777" />
            <circle cx="15" cy="13.500" r="5.700" fill="#fff" />
            <path d="M11 12.500a4.200 4.200 0 0 1 7.500-1.500M19 14.500a4.200 4.200 0 0 1-7.500 1.500M18.800 8.500V11.300H16M11.200 18.500v-2.800H14" stroke="#0a6cc8" strokeWidth="1.400" fill="none" />
          </svg>
        </Item>
        <Item $ml={23}><Label w={29} size={14.4}>ENG</Label></Item>
        <Item $ml={23}>
          <svg width="20" height="16" viewBox="0 0 20 16" stroke="#222" strokeWidth="1.500" fill="none">
            <path d="M.8 6Q10-3 19.200 6M3.500 9Q10 2.500 16.500 9M6.300 11.700q3.700-3.500 7.400 0" /><circle cx="10" cy="14" r="1.400" fill="#222" stroke="none" />
          </svg>
        </Item>
        <Item $ml={9}>
          <svg width="20" height="16" viewBox="0 0 20 16" stroke="#222" strokeWidth="1.200" fill="none">
            <path d="M1 5h3.500l4-4v14l-4-4H1zM12 4.500l7 7M19 4.500l-7 7" />
          </svg>
        </Item>
        <Item $ml={10}>
          <svg width="21" height="18" viewBox="0 0 21 18">
            <rect x="1" y="3" width="17" height="10.500" rx="2" fill="none" stroke="#222" strokeWidth="1.400" />
            <path d="M18.500 6.500h1q1.500 1.800 0 3.600h-1z" fill="#222" />
            <path d="M5.700 6L11.500 18H0z" fill="#111" />
            <path d="M5.700 10.500v4M5.700 15.500v1.200" stroke="#fff" strokeWidth="1.200" />
          </svg>
        </Item>
        <Clock>
          <Label w={36} size={14.4}>02:18</Label>
          <Label w={72} size={14.4}>25.06.2024</Label>
        </Clock>
        <Item $ml={11}>
          <svg width="17" height="19" viewBox="0 0 17 19" stroke="#222" strokeWidth="1.400" fill="none">
            <path d="M2.800 12V7.500a5.700 5.700 0 0 1 11.400 0V12l2 3H.8zM6.300 15.500q2.200 3.500 4.400 0" />
          </svg>
        </Item>
      </Taskbar>
    </Window>
  );
}
